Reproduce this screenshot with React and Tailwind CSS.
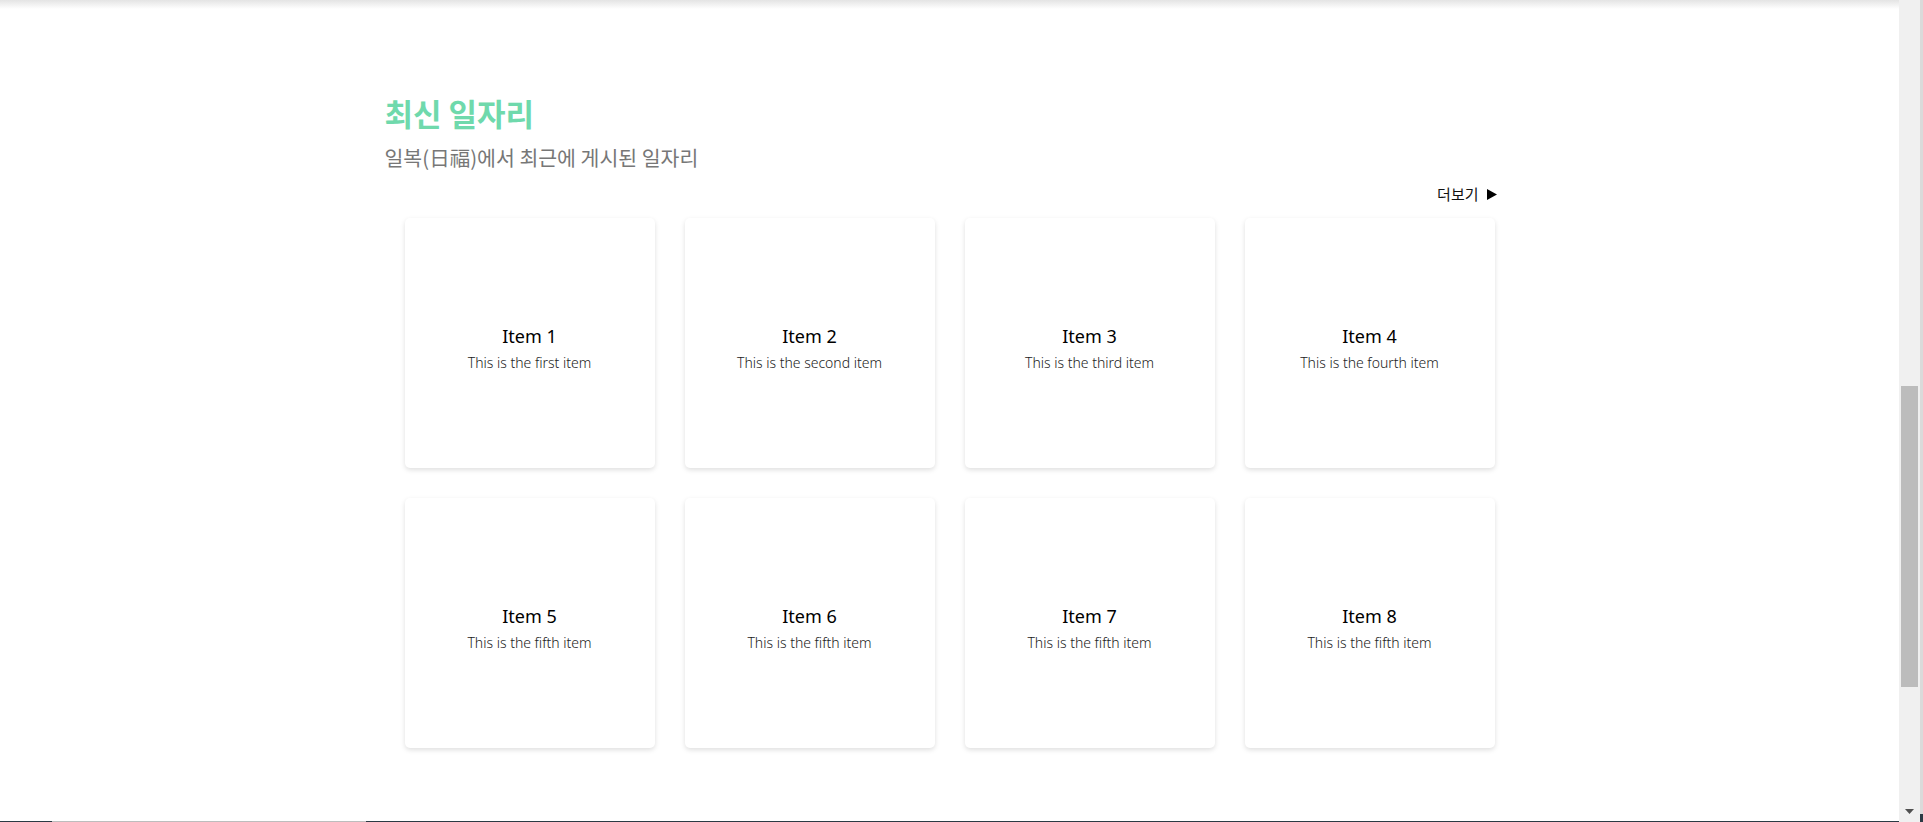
const items = [
  { title: "Item 1", desc: "This is the first item" },
  { title: "Item 2", desc: "This is the second item" },
  { title: "Item 3", desc: "This is the third item" },
  { title: "Item 4", desc: "This is the fourth item" },
  { title: "Item 5", desc: "This is the fifth item" },
  { title: "Item 6", desc: "This is the fifth item" },
  { title: "Item 7", desc: "This is the fifth item" },
  { title: "Item 8", desc: "This is the fifth item" },
];

function JobCard({ title, desc }) {
  return (
    <div className="w-[250px] h-[250px] bg-white rounded-[5px] shadow-[0_2px_5px_rgba(0,0,0,0.13)] flex flex-col items-center justify-center pt-[10px]">
      <div className="text-[18px] leading-[26px] text-black">{title}</div>
      <div className="text-[14px] leading-[20px] text-[#222] font-light mt-[4px]">{desc}</div>
    </div>
  );
}

export default function App() {
  return (
    <div className="flex h-[822px] w-[1923px] overflow-hidden bg-white font-['Noto_Sans','Noto_Sans_CJK_KR',sans-serif]">
      <div className="flex-1 flex flex-col">
        <div className="h-[9px] bg-gradient-to-b from-[#e4e4e4] to-white" />
        <main className="flex-1">
          <div className="w-[1130px] mx-auto pt-[84px]">
            <h2 className="text-[31px] leading-[40px] font-semibold text-[#6fd9ac] font-['Noto_Sans_CJK_KR',sans-serif]">
              최신 일자리
            </h2>
            <p className="mt-[10px] text-[20.5px] leading-[28px] text-[#777] font-['Noto_Sans_CJK_KR',sans-serif]">
              일복(日福)에서 최근에 게시된 일자리
            </p>
            <div className="w-[1094px] mx-auto mt-[12px] flex justify-end">
              <button className="flex items-center gap-[8px] text-[15px] leading-[22px] font-normal text-[#111] font-['Noto_Sans_CJK_KR',sans-serif]">
                더보기
                <svg width="10" height="11" viewBox="0 0 10 11">
                  <path d="M0 0 L10 5.5 L0 11 Z" fill="#000" />
                </svg>
              </button>
            </div>
            <div className="w-[1090px] mx-auto mt-[13px] grid grid-cols-4 gap-[30px]">
              {items.map((it) => (
                <JobCard key={it.title} title={it.title} desc={it.desc} />
              ))}
            </div>
          </div>
        </main>
        <div className="h-[1px] flex">
          <div className="w-[52px] bg-[#2b3a44]" />
          <div className="w-[314px] bg-[#bdbdbd]" />
          <div className="flex-1 bg-[#2b3a44]" />
        </div>
      </div>
      <div className="w-[21px] bg-[#f0f0f0] flex flex-col items-center">
        <div className="h-[386px]" />
        <div className="w-[17px] h-[301px] bg-[#bcbcbc]" />
        <div className="flex-1" />
        <svg width="9" height="6" viewBox="0 0 9 6" className="mb-[7px]">
          <path d="M0 0 L9 0 L4.5 5 Z" fill="#505050" />
        </svg>
      </div>
      <div className="w-[3px] bg-[#dadada] flex flex-col">
        <div className="flex-1" />
        <div className="h-[8px] bg-[#2b3a44]" />
      </div>
    </div>
  );
}
